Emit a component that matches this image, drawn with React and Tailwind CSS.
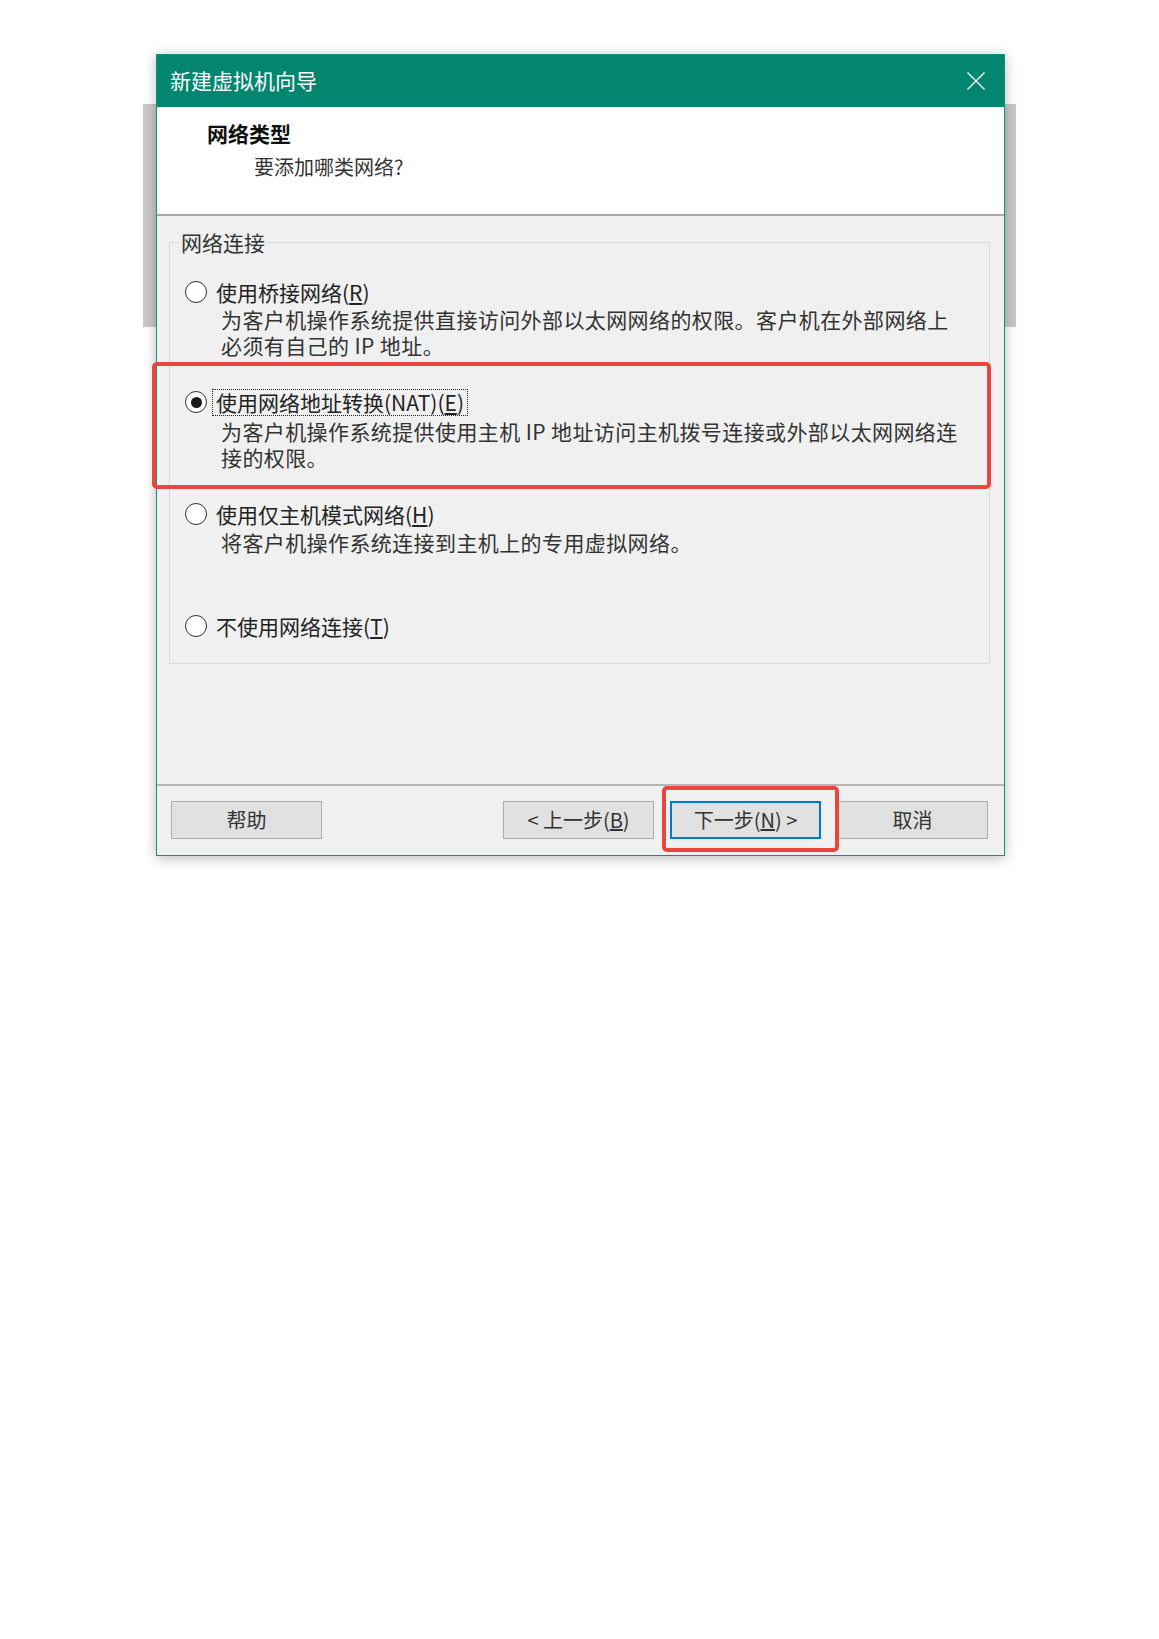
import React, { useState } from 'react';

const FONT = { fontFamily: '"Noto Sans CJK SC", "Noto Sans", sans-serif' };

const options = [
  {
    key: 'bridged',
    label: <>使用桥接网络(<u>R</u>)</>,
    desc: ['为客户机操作系统提供直接访问外部以太网网络的权限。客户机在外部网络上', '必须有自己的 IP 地址。'],
    mt: 'mt-[20px]',
    descMt: '-mt-[2px]',
  },
  {
    key: 'nat',
    label: <>使用网络地址转换(NAT)(<u>E</u>)</>,
    desc: ['为客户机操作系统提供使用主机 IP 地址访问主机拨号连接或外部以太网网络连', '接的权限。'],
    mt: 'mt-[28px]',
    descMt: 'mt-0',
  },
  {
    key: 'hostonly',
    label: <>使用仅主机模式网络(<u>H</u>)</>,
    desc: ['将客户机操作系统连接到主机上的专用虚拟网络。'],
    mt: 'mt-[28px]',
    descMt: '-mt-[1px]',
  },
  {
    key: 'none',
    label: <>不使用网络连接(<u>T</u>)</>,
    desc: [],
    mt: 'mt-[55px]',
    descMt: 'mt-0',
  },
];

const Radio = ({ checked }) => (
  <span className="w-[22px] h-[22px] rounded-full border border-[#333333] bg-white flex items-center justify-center shrink-0">
    {checked && <span className="w-[11px] h-[11px] rounded-full bg-[#1a1a1a]" />}
  </span>
);

const Button = ({ children, focused }) => (
  <button
    type="button"
    className={`w-[151px] h-[38px] bg-[#e1e1e1] text-[20px] text-[#333333] flex items-center justify-center ${
      focused ? 'border-2 border-[#0078d7]' : 'border border-[#adadad]'
    }`}
  >
    {children}
  </button>
);

export default function App() {
  const [selected, setSelected] = useState('nat');

  return (
    <div className="relative min-h-screen bg-white pt-[54px] pl-[156px]" style={FONT}>
      {/* gray strip behind the window */}
      <div className="absolute left-[143px] top-[104px] w-[873px] h-[223px] bg-[#c9c9c9]" />

      {/* Wizard window */}
      <div className="relative w-[849px] border border-[#16907b] shadow-[0_2px_12px_rgba(0,0,0,0.28)]">
        {/* Title bar */}
        <div className="h-[52px] bg-[#03866f] flex items-center justify-between pl-[13px] pr-[19px]">
          <span className="text-white text-[21px]">新建虚拟机向导</span>
          <svg width="18" height="18" viewBox="0 0 18 18">
            <path d="M0.5 0.5 L17.5 17.5 M17.5 0.5 L0.5 17.5" stroke="#ffffff" strokeWidth="1.4" />
          </svg>
        </div>

        {/* Header */}
        <div className="h-[109px] bg-white border-b-2 border-[#a8a8a8] pl-[50px] pt-[12px]">
          <div className="text-[21px] leading-[28px] font-bold text-[#111111]">网络类型</div>
          <div className="mt-[6px] ml-[47px] text-[20px] leading-[28px] text-[#333333]">要添加哪类网络?</div>
        </div>

        {/* Body */}
        <div className="h-[570px] bg-[#f0f0f0] pl-[12px] pr-[14px] pt-[12px] border-b-2 border-[#b4b4b4]">
          <fieldset className="border border-[#d9d9d9] pl-[9px] pr-[9px] pb-[21px]">
            <legend className="px-[2px] text-[21px] leading-[28px] text-[#333333]">网络连接</legend>
            <div className="ml-[6px]">
              {options.map((o) => (
                <div key={o.key} className={o.mt} onClick={() => setSelected(o.key)}>
                  <div className="h-[32px] flex items-center">
                    <Radio checked={selected === o.key} />
                    <span
                      className={`ml-[5px] px-[3px] leading-[25px] text-[21px] text-[#222222] whitespace-nowrap border border-dotted ${
                        selected === o.key ? 'border-[#222222]' : 'border-transparent'
                      }`}
                    >
                      {o.label}
                    </span>
                  </div>
                  {o.desc.length > 0 && (
                    <div className={`${o.descMt} pl-[36px] text-[21px] leading-[26px] tracking-[0.4px] text-[#333333] whitespace-nowrap`}>
                      {o.desc.map((line) => (
                        <div key={line}>{line}</div>
                      ))}
                    </div>
                  )}
                </div>
              ))}
            </div>
          </fieldset>
        </div>

        {/* Footer */}
        <div className="h-[69px] bg-[#f0f0f0] flex items-start pt-[15px] pl-[14px] pr-[16px]">
          <Button>帮助</Button>
          <div className="ml-auto flex gap-[16px]">
            <Button>&lt; 上一步(<u>B</u>)</Button>
            <Button focused>下一步(<u>N</u>) &gt;</Button>
            <Button>取消</Button>
          </div>
        </div>
      </div>

      {/* red annotation boxes */}
      <div className="absolute left-[152px] top-[362px] w-[839px] h-[127px] border-4 border-[#e9463e] rounded-[5px]" />
      <div className="absolute left-[662px] top-[786px] w-[177px] h-[66px] border-4 border-[#e9463e] rounded-[5px]" />
    </div>
  );
}
